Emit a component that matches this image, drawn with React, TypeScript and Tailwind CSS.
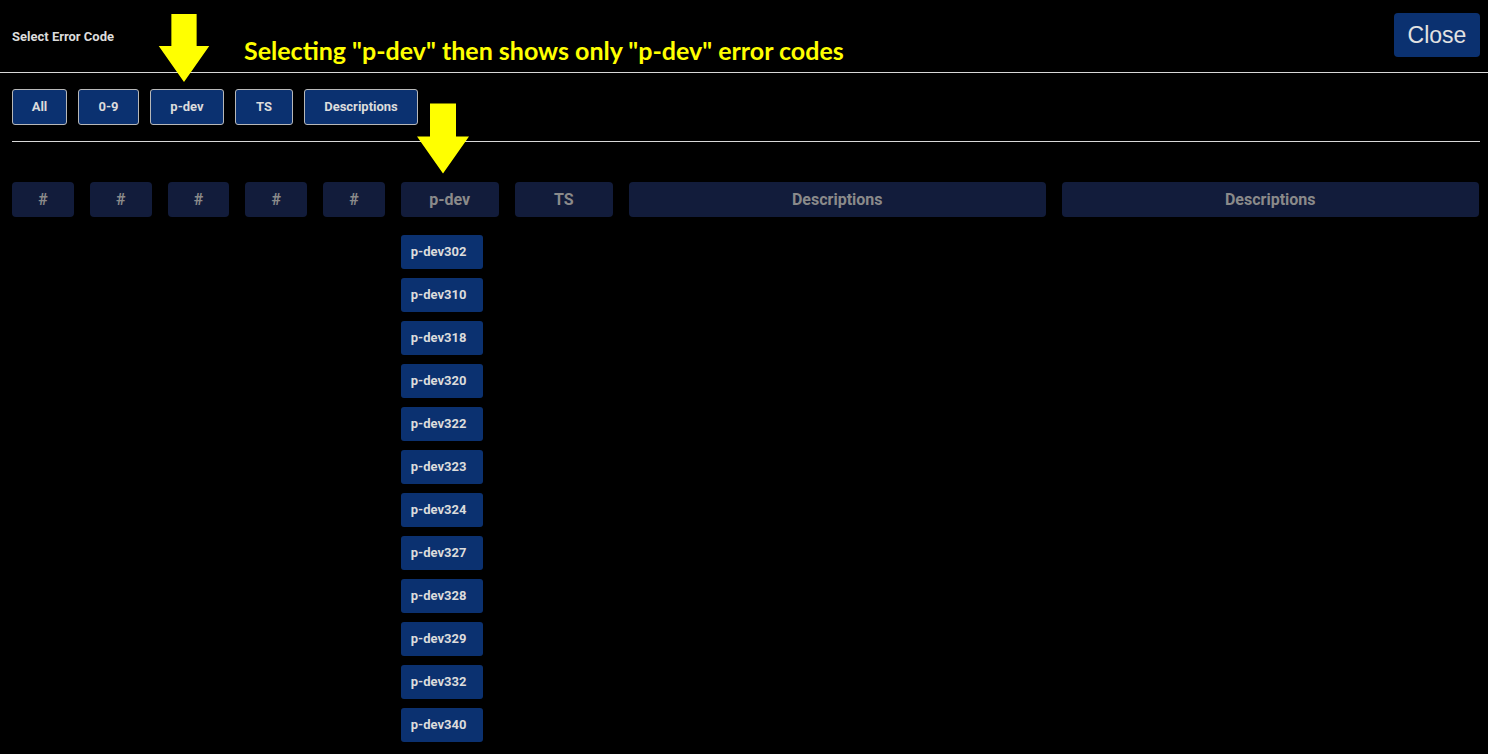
import React from "react";

const codes = [
  "p-dev302",
  "p-dev310",
  "p-dev318",
  "p-dev320",
  "p-dev322",
  "p-dev323",
  "p-dev324",
  "p-dev327",
  "p-dev328",
  "p-dev329",
  "p-dev332",
  "p-dev340",
];

const filters = [
  { label: "All", w: "w-[55px]" },
  { label: "0-9", w: "w-[61px]" },
  { label: "p-dev", w: "w-[74px]" },
  { label: "TS", w: "w-[58px]" },
  { label: "Descriptions", w: "w-[114px]" },
];

const columns = [
  { title: "#", w: "w-[61.75px]" },
  { title: "#", w: "w-[61.75px]" },
  { title: "#", w: "w-[61.75px]" },
  { title: "#", w: "w-[61.75px]" },
  { title: "#", w: "w-[61.75px]" },
  { title: "p-dev", w: "w-[98px]", items: codes },
  { title: "TS", w: "w-[98px]" },
  { title: "Descriptions", w: "w-[417px]" },
  { title: "Descriptions", w: "w-[417px]" },
];

const Arrow = ({ className }: { className: string }) => (
  <svg className={className} viewBox="0 0 52 70" width="52" height="70">
    <path d="M13 0 H39 V33 H52 L26 70 L0 33 H13 Z" fill="#ffff00" />
  </svg>
);

export default function App() {
  return (
    <div
      className="relative min-h-[754px] bg-black overflow-hidden"
      style={{ fontFamily: "Roboto, 'Liberation Sans', sans-serif" }}
    >
      {/* header */}
      <div className="flex items-start justify-between h-[72px] pl-3 pr-2">
        <div className="pt-[27px] text-[13px] font-bold text-[#dcdcdc]">
          Select Error Code
        </div>
        <button
          className="mt-[13px] w-[86px] h-[44px] rounded-[4px] bg-[#0b3170] text-[#e2e2e2] text-[23px]"
          style={{ fontFamily: "'Liberation Sans', Arial, sans-serif" }}
        >
          Close
        </button>
      </div>
      <div className="h-px bg-[#d8d8d8]" />

      {/* filters */}
      <div className="flex gap-[11px] px-3 pt-4 pb-4">
        {filters.map((f) => (
          <button
            key={f.label}
            className={`${f.w} h-[36px] rounded-[3px] border border-[#b8b8b8] bg-[#0b3170] text-[13px] font-bold text-[#dcdcdc]`}
          >
            {f.label}
          </button>
        ))}
      </div>
      <div className="ml-3 mr-2 h-px bg-[#d8d8d8]" />

      {/* table */}
      <div className="flex gap-4 pl-3 pr-2 pt-[40px]">
        {columns.map((c, i) => (
          <div key={i} className={`${c.w} shrink-0 flex flex-col gap-[9px]`}>
            <div className="h-[35px] mb-[9px] rounded-[4px] bg-[#121c3b] flex items-center justify-center text-[16px] font-bold text-[#8a8a8a]">
              {c.title}
            </div>
            {c.items?.map((code) => (
              <div
                key={code}
                className="w-[82px] h-[34px] rounded-[3px] bg-[#0b3170] flex items-center pl-[10px] text-[13px] font-bold text-[#dcdcdc]"
              >
                {code}
              </div>
            ))}
          </div>
        ))}
      </div>

      {/* annotations */}
      <div
        className="absolute left-[244px] top-[38px] text-[25px] font-bold text-[#ffff00] leading-none"
        style={{ fontFamily: "Lato, 'Open Sans', sans-serif" }}
      >
        Selecting "p-dev" then shows only "p-dev" error codes
      </div>
      <Arrow className="absolute left-[158px] top-[14px] h-[68px]" />
      <Arrow className="absolute left-[417px] top-[101px] h-[75px]" />
    </div>
  );
}
